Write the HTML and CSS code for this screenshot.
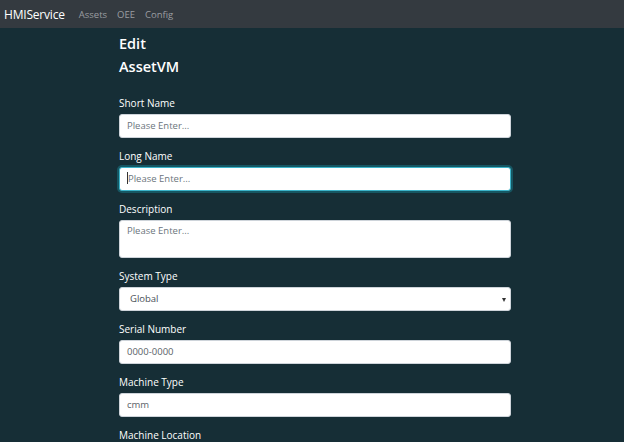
FILE: index.html
```html
<!DOCTYPE html>
<html>
<head>
<meta charset="utf-8">
<link rel="stylesheet" href="styles.css">
</head>
<body>
<nav class="navbar">
  <span class="brand">HMIService</span>
  <a class="nav-link">Assets</a>
  <a class="nav-link">OEE</a>
  <a class="nav-link">Config</a>
</nav>
<main class="container">
  <h1 class="title">Edit</h1>
  <h2 class="subtitle">AssetVM</h2>
  <form class="form">
    <div class="group">
      <label class="label">Short Name</label>
      <div class="control placeholder">Please Enter...</div>
    </div>
    <div class="group">
      <label class="label">Long Name</label>
      <div class="control placeholder focused"><span class="caret"></span>Please Enter...</div>
    </div>
    <div class="group">
      <label class="label">Description</label>
      <div class="control placeholder textarea">Please Enter...</div>
    </div>
    <div class="group">
      <label class="label">System Type</label>
      <div class="control select">Global<span class="arrow"></span></div>
    </div>
    <div class="group">
      <label class="label">Serial Number</label>
      <div class="control value">0000-0000</div>
    </div>
    <div class="group">
      <label class="label">Machine Type</label>
      <div class="control value">cmm</div>
    </div>
    <div class="group">
      <label class="label">Machine Location</label>
      <div class="control value"></div>
    </div>
  </form>
</main>
</body>
</html>
```
FILE: styles.css
```css
html, body {
  margin: 0;
  padding: 0;
  height: 100%;
  overflow: hidden;
}
body {
  background: #162e36;
  font-family: "Open Sans", "Noto Sans", sans-serif;
  color: #fff;
}
.navbar {
  height: 28px;
  background: #343a40;
  display: flex;
  align-items: center;
  padding-left: 4px;
  box-sizing: border-box;
}
.brand {
  font-size: 12px;
  color: #fff;
  margin-right: 14px;
  letter-spacing: -0.2px;
}
.nav-link {
  font-size: 9.5px;
  color: #9a9da0;
  margin-right: 10px;
}
.container {
  width: 392px;
  margin-left: 119px;
  padding-top: 4px;
}
.title, .subtitle {
  margin: 0;
  font-size: 14.5px;
  font-weight: 600;
  line-height: 23px;
}
.form {
  margin-top: 18px;
  display: flex;
  flex-direction: column;
  gap: 11px;
}
.group {
  display: flex;
  flex-direction: column;
}
.label {
  font-size: 10px;
  line-height: 14px;
  margin-bottom: 4px;
  color: #fff;
}
.control {
  position: relative;
  height: 24px;
  box-sizing: border-box;
  background: #fff;
  border: 1px solid #ced4da;
  border-radius: 3px;
  padding: 0 7px;
  font-size: 9.5px;
  line-height: 22px;
  color: #495057;
}
.placeholder {
  color: #6c757d;
}
.value {
  color: #5a6268;
}
.focused {
  border-color: #3bb3c9;
  box-shadow: 0 0 0 2px rgba(23, 162, 184, 0.35);
}
.caret {
  display: inline-block;
  width: 1px;
  height: 12px;
  background: #333;
  vertical-align: middle;
  margin-top: -2px;
}
.textarea {
  height: 38px;
  line-height: 20px;
}
.select {
  padding-left: 10px;
  color: #495057;
}
.arrow {
  position: absolute;
  right: 4px;
  top: 10px;
  width: 0;
  height: 0;
  border-left: 2.5px solid transparent;
  border-right: 2.5px solid transparent;
  border-top: 4px solid #333;
}
```
